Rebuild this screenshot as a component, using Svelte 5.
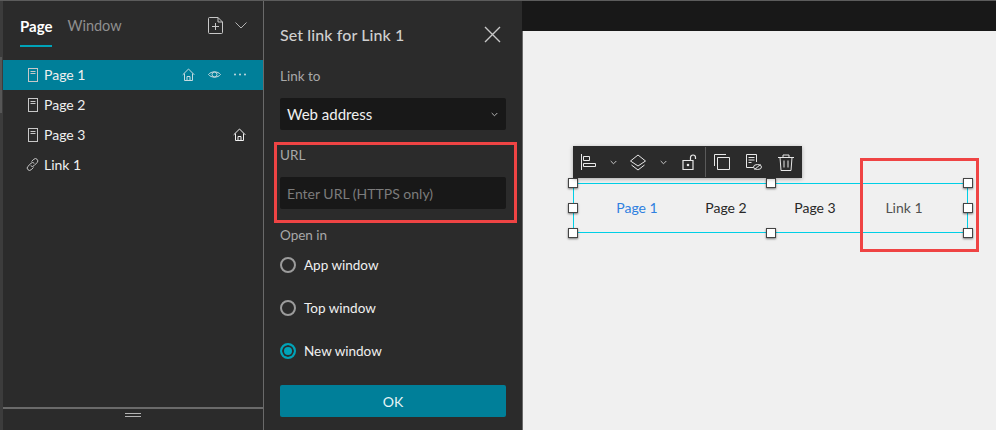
<script>
    const pages = [
        { label: "Page 1", icon: "page", selected: true },
        { label: "Page 2", icon: "page" },
        { label: "Page 3", icon: "page", home: true },
        { label: "Link 1", icon: "link" },
    ];
    const targets = [
        { label: "App window" },
        { label: "Top window" },
        { label: "New window", checked: true },
    ];
    const navItems = ["Page 1", "Page 2", "Page 3", "Link 1"];
    // handle positions around the selected widget, in percent
    const handles = [
        [0, 0], [50, 0], [100, 0],
        [0, 50], [100, 50],
        [0, 100], [50, 100], [100, 100],
    ];
</script>

{#snippet homeIcon()}
    <svg width="13" height="13" viewBox="0 0 13 13" fill="none" stroke="currentColor" stroke-width="1">
        <path d="M.7 6.800 6.500 1 12.300 6.800M2.500 5.500v7h8v-7M5 12.500V8.500h3v4" />
    </svg>
{/snippet}

<div class="screen">
    <div class="rail"><span></span></div>
    <aside class="pages">
        <header class="tabs">
            <span class="tab active">Page</span>
            <span class="tab">Window</span>
            <svg class="add" width="15" height="17" viewBox="0 0 15 17" fill="none" stroke="#c8c8c8" stroke-width="1">
                <path d="M.5 1.500a1 1 0 0 1 1-1H10l4.500 4.500v10.500a1 1 0 0 1-1 1h-12a1 1 0 0 1-1-1z" />
                <path d="M10 .5V5h4.500M7.500 6v7M4 9.500h7" />
            </svg>
            <svg width="12" height="7" viewBox="0 0 12 7" fill="none" stroke="#b4b4b4" stroke-width="1">
                <path d="M.5 .5 6 6l5.500-5.500" />
            </svg>
        </header>
        <ul class="tree">
            {#each pages as page}
                <li class="row" class:selected={page.selected}>
                    {#if page.icon === "page"}
                        <svg class="kind" width="10" height="14" viewBox="0 0 10 14" fill="none" stroke="#c8c8c8" stroke-width="1">
                            <rect x=".5" y=".5" width="9" height="13" />
                            <path d="M2.500 3.500h5M2.500 5.500h5" />
                        </svg>
                    {:else}
                        <svg class="kind link" width="13" height="13" viewBox="0 0 13 13" fill="none" stroke="#c8c8c8" stroke-width="1">
                            <path d="M5.500 3.500 7.800 1.300a2.300 2.300 0 0 1 3.300 3.300L8 7.700a2.300 2.300 0 0 1-3.300 0" />
                            <path d="M7.500 9.500 5.200 11.700a2.300 2.300 0 0 1-3.300-3.300L5 5.300a2.300 2.300 0 0 1 3.300 0" />
                        </svg>
                    {/if}
                    <span>{page.label}</span>
                    {#if page.selected}
                        <span class="actions dim">
                            {@render homeIcon()}
                            <svg width="13" height="11" viewBox="0 0 13 11" fill="none" stroke="currentColor" stroke-width="1">
                                <path d="M.5 5.500C3 2 10 2 12.500 5.500 10 9 3 9 .5 5.500z" />
                                <circle cx="6.500" cy="5.500" r="2.500" />
                            </svg>
                            <svg width="12" height="3" viewBox="0 0 12 3" fill="currentColor">
                                <circle cx="1" cy="1.500" r="1" />
                                <circle cx="6" cy="1.500" r="1" />
                                <circle cx="11" cy="1.500" r="1" />
                            </svg>
                        </span>
                    {:else if page.home}
                        <span class="actions">{@render homeIcon()}</span>
                    {/if}
                </li>
            {/each}
        </ul>
        <footer class="grip"><span></span></footer>
    </aside>

    <section class="link-panel">
        <header class="panel-head">
            <h2>Set link for Link 1</h2>
            <svg width="17" height="17" viewBox="0 0 17 17" stroke="#c8c8c8" stroke-width="1.400">
                <path d="M1 1l15 15M16 1 1 16" />
            </svg>
        </header>
        <div class="label first">Link to</div>
        <div class="field select">
            <span>Web address</span>
            <svg width="7" height="5" viewBox="0 0 7 5" fill="none" stroke="#b4b4b4" stroke-width="1">
                <path d="M.7 1 3.500 3.800 6.300 1" />
            </svg>
        </div>
        <div class="label url">URL</div>
        <div class="field placeholder">Enter URL (HTTPS only)</div>
        <div class="label open">Open in</div>
        <div class="radios">
            {#each targets as target}
                <div class="radio-row">
                    <span class="radio" class:checked={target.checked}></span>
                    <span>{target.label}</span>
                </div>
            {/each}
        </div>
        <button class="ok">OK</button>
        <div class="callout url-callout"></div>
    </section>

    <main class="canvas-wrap">
        <div class="topbar"></div>
        <div class="canvas">
            <div class="toolbar">
                <svg width="15" height="16" viewBox="0 0 15 16" fill="none" stroke="#e8e8e8" stroke-width="1">
                    <path d="M.5 0v16M2.500 2.500h6v4h-6zM2.500 9.500h12v3h-12z" />
                </svg>
                <svg class="tiny" width="7" height="5" viewBox="0 0 7 5" fill="none" stroke="#c8c8c8" stroke-width="1">
                    <path d="M.7 1 3.500 3.800 6.300 1" />
                </svg>
                <svg class="layers" width="16" height="17" viewBox="0 0 16 17" fill="none" stroke="#e8e8e8" stroke-width="1">
                    <path d="M8 1 15.500 7 8 12 .5 7zM1.500 11 8 16l6.500-5" />
                </svg>
                <svg class="tiny" width="7" height="5" viewBox="0 0 7 5" fill="none" stroke="#c8c8c8" stroke-width="1">
                    <path d="M.7 1 3.500 3.800 6.300 1" />
                </svg>
                <svg class="lock" width="16" height="16" viewBox="0 0 16 16" fill="none" stroke="#e8e8e8" stroke-width="1.200">
                    <path d="M1 6.500h10v9H1zM8.500 6V3.500a2.500 2.500 0 0 1 5 0V5" />
                    <circle cx="6" cy="11" r=".7" fill="#e8e8e8" />
                </svg>
                <i class="sep"></i>
                <svg class="copy" width="16" height="16" viewBox="0 0 16 16" fill="none" stroke="#e8e8e8" stroke-width="1">
                    <path d="M.500 12V.500H12M3.500 3.500h12v12h-12z" />
                </svg>
                <svg class="hide" width="16" height="17" viewBox="0 0 16 17" fill="none" stroke="#e8e8e8" stroke-width="1">
                    <path d="M7.500 13.500H.5V.5h10V8M2.500 3.500h6M2.500 6h6M2.500 8.500h3" />
                    <ellipse cx="11.500" cy="13" rx="4" ry="2.500" />
                    <path d="M8.500 15.500 14.500 10.500" />
                </svg>
                <svg class="trash" width="16" height="17" viewBox="0 0 16 17" fill="none" stroke="#e8e8e8" stroke-width="1">
                    <path d="M0 3.500h16M5 3.500V1h6v2.500M2 3.500l1 13h10l1-13M6 6.500v7M10 6.500v7" />
                </svg>
            </div>
            <div class="widget">
                {#each navItems as item, i}
                    <span class="nav-item" class:current={i === 0} class:muted={i === 3}>{item}</span>
                {/each}
                <div class="handles">
                    {#each handles as [x, y]}
                        <i class="handle" style="left: {x}%; top: {y}%"></i>
                    {/each}
                </div>
            </div>
            <div class="callout link-callout"></div>
        </div>
    </main>
</div>

<style>
    :global(body) {
        background: #2b2b2b;
    }

    .screen {
        display: flex;
        width: 996px;
        height: 430px;
        overflow: hidden;
        font-family: "Lato", "Open Sans", sans-serif;
        font-size: 14px;
        color: #f0f0f0;
        background: #2b2b2b;
        border-top: 1px solid #5c5c5c;
        box-sizing: border-box;
    }

    .rail {
        width: 3px;
        padding-top: 56px;
        background: #3c3c3c;
        box-sizing: border-box;
        flex: none;
    }

    .rail span {
        display: block;
        width: 2px;
        height: 56px;
        background: #565656;
    }

    .pages {
        display: flex;
        flex-direction: column;
        width: 261px;
        box-sizing: border-box;
        border-right: 1px solid #6a6a6a;
        flex: none;
    }

    .tabs {
        display: flex;
        align-items: center;
        height: 59px;
        padding: 0 16px 10px 17px;
        box-sizing: border-box;
    }

    .tab {
        position: relative;
        margin-right: 15px;
        color: #8f8f8f;
        font-size: 14.500px;
    }

    .tab.active {
        color: #fff;
        font-size: 15px;
        font-weight: 700;
    }

    .tab.active::after {
        content: "";
        position: absolute;
        left: 0;
        right: 0;
        bottom: -12px;
        height: 2px;
        background: #00a3b8;
    }

    .add {
        margin-left: auto;
        margin-right: 12px;
    }

    .tree {
        flex: 1;
        margin: 0;
        padding: 0;
        list-style: none;
    }

    .row {
        display: flex;
        align-items: center;
        height: 30px;
        padding: 0 17px 1px 25px;
        box-sizing: border-box;
    }

    .row.selected {
        background: #007f99;
    }

    .kind {
        margin-right: 6px;
    }

    .kind.link {
        margin-left: -2px;
        margin-right: 5px;
    }

    .actions {
        display: flex;
        align-items: center;
        gap: 13px;
        margin-left: auto;
    }

    .actions.dim {
        color: #c6dbe0;
    }

    .grip {
        display: flex;
        align-items: flex-start;
        justify-content: center;
        height: 23px;
        padding-top: 4px;
        box-sizing: border-box;
        border-top: 2px solid #6a6a6a;
    }

    .grip span {
        width: 16px;
        height: 2px;
        border-top: 1px solid #b4b4b4;
        border-bottom: 1px solid #b4b4b4;
    }

    .link-panel {
        position: relative;
        display: flex;
        flex-direction: column;
        width: 258px;
        padding: 0 16px;
        box-sizing: border-box;
        flex: none;
    }

    .panel-head {
        display: flex;
        align-items: center;
        justify-content: space-between;
        height: 67px;
        padding-right: 5px;
    }

    h2 {
        margin: 0;
        font-size: 16px;
        font-weight: 500;
        color: #d0d0d0;
        letter-spacing: .1px;
    }

    .label {
        height: 31px;
        font-size: 13.500px;
        line-height: 18px;
        color: #a8a8a8;
        flex: none;
    }

    .label.first {
        margin-top: -1px;
    }

    .label.url {
        margin-top: 16px;
    }

    .label.open {
        margin-top: 17px;
    }

    .field {
        display: flex;
        align-items: center;
        justify-content: space-between;
        height: 32px;
        padding: 0 8px 0 7px;
        border-radius: 2px;
        background: #181818;
        flex: none;
    }

    .select span {
        font-size: 15px;
    }

    .placeholder {
        color: #7c7c7c;
    }

    .radios {
        display: flex;
        flex-direction: column;
        gap: 27px;
    }

    .radio-row {
        display: flex;
        align-items: center;
        gap: 8px;
        height: 16px;
        font-size: 13.500px;
    }

    .radio {
        width: 12px;
        height: 12px;
        border: 2px solid #9c9c9c;
        border-radius: 50%;
    }

    .radio.checked {
        border-color: #00a3b8;
        background: #00a3b8;
        box-shadow: inset 0 0 0 2px #2b2b2b;
    }

    .ok {
        height: 32px;
        margin-top: 26px;
        border: 0;
        border-radius: 2px;
        background: #007f99;
        color: #e8f4f6;
        font: inherit;
        flex: none;
    }

    .canvas-wrap {
        display: flex;
        flex-direction: column;
        flex: 1;
    }

    .topbar {
        height: 30px;
        background: #181818;
    }

    .canvas {
        position: relative;
        flex: 1;
        background: #f0f0f0;
        border-left: 1px solid #6a6a6a;
    }

    .toolbar {
        position: absolute;
        left: 50px;
        top: 115px;
        display: flex;
        align-items: center;
        height: 32px;
        padding: 0 8px;
        background: #2b2b2b;
        box-shadow: 0 1px 4px rgba(0, 0, 0, .3);
        z-index: 1;
    }

    .tiny {
        margin: 0 14px;
    }

    .layers {
        margin-left: -1px;
    }

    .lock {
        margin-left: 1px;
    }

    .sep {
        width: 1px;
        height: 30px;
        margin: 0 8px 0 7px;
        background: #5a5a5a;
    }

    .hide,
    .trash {
        margin-left: 16px;
    }

    .widget {
        position: absolute;
        left: 50px;
        top: 152px;
        display: flex;
        align-items: center;
        justify-content: center;
        width: 395px;
        height: 50px;
        padding-bottom: 2px;
        box-sizing: border-box;
        border: 1px solid #00cfe6;
        color: #282828;
        font-size: 14px;
    }

    .nav-item {
        width: 89px;
        text-align: center;
    }

    .current {
        color: #2f80e0;
    }

    .muted {
        color: #505050;
    }

    .handles {
        position: absolute;
        inset: -1px;
    }

    .handle {
        position: absolute;
        width: 10px;
        height: 10px;
        margin: -5px 0 0 -5px;
        box-sizing: border-box;
        background: #fff;
        border: 1px solid #444;
        box-shadow: 0 1px 2px rgba(0, 0, 0, .5);
    }

    .callout {
        position: absolute;
        border: 3px solid #ef4444;
        box-sizing: border-box;
    }

    .url-callout {
        left: 10px;
        top: 141px;
        width: 243px;
        height: 81px;
    }

    .link-callout {
        left: 337px;
        top: 127px;
        width: 119px;
        height: 94px;
    }
</style>
